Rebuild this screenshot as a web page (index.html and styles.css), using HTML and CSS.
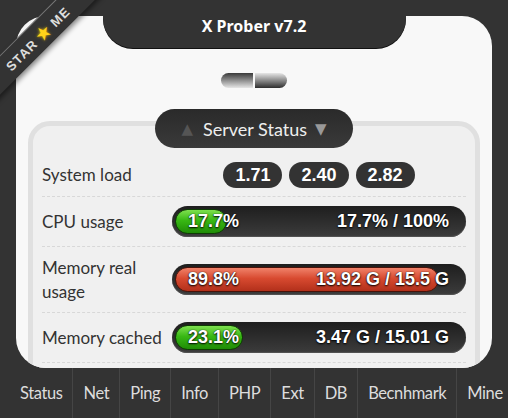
FILE: index.html
```html
<!DOCTYPE html>
<html>
<head>
<meta charset="utf-8">
<link rel="stylesheet" href="styles.css">
</head>
<body>
<a class="ribbon"><span class="ribbon-text">STAR <span class="star">★</span> ME</span></a>
<div class="page">
  <div class="title">X Prober v7.2</div>
  <div class="toggle"><span class="half left"></span><span class="half right"></span></div>
  <div class="card">
    <div class="legend"><span class="tri up">▲</span>Server Status<span class="tri down">▼</span></div>
    <div class="row short">
      <div class="label">System load</div>
      <div class="value loads">
        <span class="pill">1.71</span><span class="pill">2.40</span><span class="pill">2.82</span>
      </div>
    </div>
    <div class="row">
      <div class="label">CPU usage</div>
      <div class="value">
        <div class="bar">
          <div class="fill green" style="width:17.7%"></div>
          <span class="bar-l">17.7%</span><span class="bar-r">17.7% / 100%</span>
        </div>
      </div>
    </div>
    <div class="row tall">
      <div class="label">Memory real usage</div>
      <div class="value">
        <div class="bar">
          <div class="fill red" style="width:89.8%"></div>
          <span class="bar-l">89.8%</span><span class="bar-r">13.92 G / 15.5 G</span>
        </div>
      </div>
    </div>
    <div class="row">
      <div class="label">Memory cached</div>
      <div class="value">
        <div class="bar">
          <div class="fill green" style="width:23.1%"></div>
          <span class="bar-l">23.1%</span><span class="bar-r">3.47 G / 15.01 G</span>
        </div>
      </div>
    </div>
  </div>
</div>
<nav class="nav">
  <a>Status</a><a>Net</a><a>Ping</a><a>Info</a><a>PHP</a><a>Ext</a><a>DB</a><a>Becnhmark</a><a>Mine</a>
</nav>
</body>
</html>
```
FILE: styles.css
```css
html, body {
  margin: 0;
  padding: 0;
  height: 100%;
}
body {
  background: #333;
  font-family: Lato, "Noto Sans", sans-serif;
  font-size: 17px;
  color: #333;
  display: flex;
  flex-direction: column;
  overflow: hidden;
  position: relative;
}
.page {
  margin: 16px 16px 0;
  height: 352px;
  flex: none;
  background: #f8f8f8;
  border-radius: 30px;
  overflow: hidden;
  padding: 0 12px;
  box-sizing: border-box;
}
.title {
  width: 303px;
  height: 32px;
  margin: 0 auto;
  background: #333;
  border-radius: 0 0 30px 30px;
  box-shadow: 0 1px 0 #111;
  color: #fff;
  font-family: "Noto Sans", sans-serif;
  font-weight: bold;
  font-size: 16px;
  text-align: center;
  line-height: 20px;
  box-sizing: border-box;
}
.toggle {
  display: flex;
  justify-content: center;
  gap: 2px;
  margin-top: 25px;
}
.half {
  width: 32px;
  height: 15px;
}
.half.left {
  border-radius: 8px 0 0 8px;
  background: linear-gradient(#3a3a3a, #e6e6e6);
}
.half.right {
  border-radius: 0 8px 8px 0;
  background: linear-gradient(#e6e6e6, #2e2e2e);
}
.card {
  margin-top: 33px;
  border: 5px solid #e0e0e0;
  border-radius: 22px;
  background: #f0f0f0;
  padding: 0 9px 20px;
}
.legend {
  width: 198px;
  height: 39px;
  margin: -17px auto 0;
  box-sizing: border-box;
  border-radius: 20px;
  background: linear-gradient(#2a2a2a, #3a3a3a);
  color: #eee;
  display: flex;
  align-items: center;
  justify-content: center;
  font-size: 18px;
}
.tri {
  font-family: "DejaVu Sans", sans-serif;
  font-size: 15px;
}
.tri.up { color: #555; margin-right: 10px; }
.tri.down { color: #999; margin-left: 8px; }
.row {
  display: grid;
  grid-template-columns: 130px 1fr;
  align-items: center;
  border-bottom: 1px dashed #d8d8d8;
  min-height: 50px;
  box-sizing: border-box;
}
.row.short { min-height: 49px; padding-top: 6px; }
.row.tall { min-height: 66px; }
.label {
  line-height: 24px;
}
.loads {
  display: flex;
  justify-content: center;
  gap: 7px;
}
.pill {
  background: #333;
  color: #fff;
  font-family: "Liberation Sans", Arial, sans-serif;
  font-weight: bold;
  font-size: 18px;
  height: 26px;
  line-height: 26px;
  padding: 0 12px;
  border-radius: 13px;
}
.bar {
  position: relative;
  height: 31px;
  border-radius: 16px;
  background: linear-gradient(#1e1e1e, #3c3c3c);
  box-shadow: inset 0 -1px 1px #555;
  padding: 3px;
  box-sizing: border-box;
  display: flex;
  align-items: center;
  font-family: "Liberation Sans", Arial, sans-serif;
  font-weight: bold;
  font-size: 18px;
  color: #fff;
  text-shadow: 0 1px 2px #000, 0 0 1px #000;
}
.fill {
  position: absolute;
  left: 3px;
  top: 3px;
  bottom: 3px;
  max-width: calc(100% - 6px);
  border-radius: 13px;
  box-sizing: border-box;
}
.fill.green {
  background: linear-gradient(#7ee04f, #38b814 45%, #1f8c06);
  border: 1px solid #0d3d02;
}
.fill.red {
  background: linear-gradient(#f0826a, #d84a30 45%, #b2301b);
  border: 1px solid #4a1208;
}
.bar-l {
  position: relative;
  margin-left: 13px;
}
.bar-r {
  position: relative;
  margin-left: auto;
  margin-right: 14px;
}
.nav {
  flex: 1;
  display: flex;
  justify-content: flex-start;
  align-items: stretch;
  font-size: 16.5px;
  letter-spacing: -0.4px;
  color: #ddd;
  padding-left: 10px;
}
.nav a {
  display: flex;
  align-items: center;
  padding: 0 10px;
  border-left: 1px solid #454545;
  white-space: nowrap;
}
.nav a:first-child { border-left: none; }
.ribbon {
  position: absolute;
  left: -38px;
  top: 24px;
  width: 150px;
  height: 27px;
  transform: rotate(-45deg);
  background: #333;
  box-shadow: 0 3px 5px rgba(0,0,0,.45);
  border-top: 1px solid #777;
  display: flex;
  align-items: center;
  justify-content: center;
  z-index: 2;
}
.ribbon-text {
  font-family: "Liberation Sans", Arial, sans-serif;
  font-weight: bold;
  font-size: 13px;
  color: #ddd;
  letter-spacing: 1px;
}
.star {
  color: #ffd21a;
  text-shadow: 0 0 3px #ffcc00;
  font-size: 16px;
}
```
